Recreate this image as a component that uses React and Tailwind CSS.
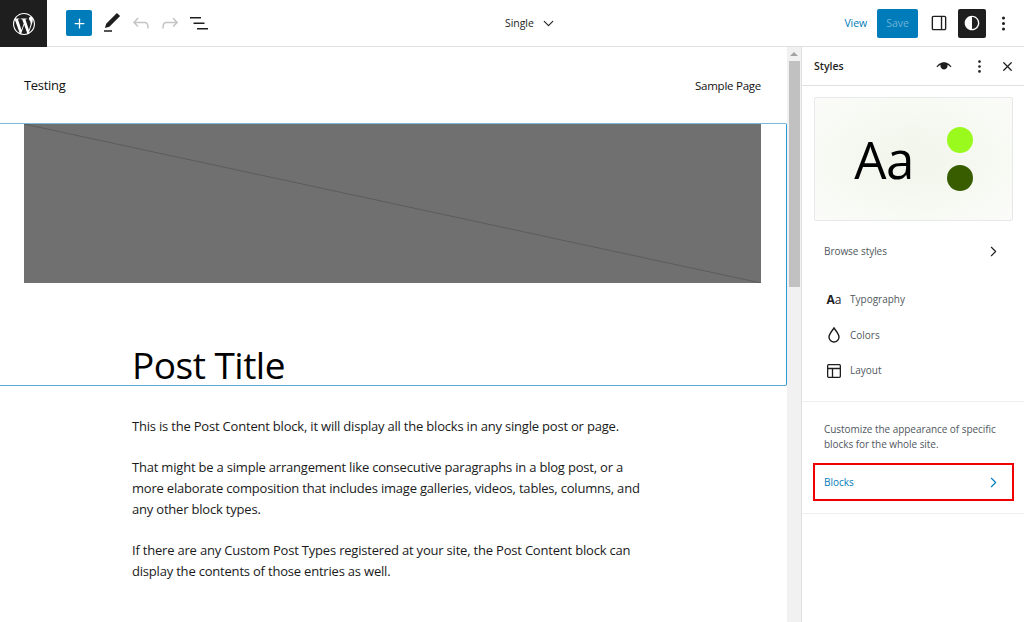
import { ChevronDown, ChevronRight, Plus, X, MoreVertical } from 'lucide-react';

const font = "font-['Open_Sans','Noto_Sans',sans-serif]";

function WpLogo() {
  return (
    <svg className="w-[22px] h-[22px] fill-white" viewBox="0 0 24 24" aria-hidden="true">
      <path d="M21.469 6.825c.84 1.537 1.318 3.3 1.318 5.175 0 3.979-2.156 7.456-5.363 9.325l3.295-9.527c.615-1.54.82-2.771.82-3.864 0-.405-.026-.78-.07-1.11m-7.981.105c.647-.03 1.232-.105 1.232-.105.582-.075.514-.93-.067-.899 0 0-1.755.135-2.88.135-1.064 0-2.85-.15-2.85-.15-.585-.03-.661.855-.075.885 0 0 .54.061 1.125.09l1.68 4.605-2.37 7.08L5.354 6.9c.649-.03 1.234-.1 1.234-.1.585-.075.516-.93-.065-.896 0 0-1.746.138-2.874.138-.2 0-.438-.008-.69-.015C4.911 3.15 8.235 1.215 12 1.215c2.809 0 5.365 1.072 7.286 2.833-.046-.003-.091-.009-.141-.009-1.06 0-1.812.923-1.812 1.914 0 .89.513 1.643 1.06 2.531.411.72.89 1.643.89 2.977 0 .915-.354 1.994-.821 3.479l-1.075 3.585-3.9-11.61.001.014zM12 22.784c-1.059 0-2.081-.153-3.048-.437l3.237-9.406 3.315 9.087c.024.053.05.101.078.149-1.12.393-2.325.609-3.582.609M1.211 12c0-1.564.336-3.05.935-4.39L7.29 21.709C3.694 19.96 1.212 16.271 1.211 12M12 0C5.385 0 0 5.385 0 12s5.385 12 12 12 12-5.385 12-12S18.615 0 12 0" />
    </svg>
  );
}

function Toolbar() {
  return (
    <header className="h-[47px] shrink-0 flex items-center border-b border-[#e0e0e0] bg-white">
      <div className="w-[47px] h-[47px] -mb-px bg-[#1e1e1e] flex items-center justify-center shrink-0">
        <WpLogo />
      </div>
      <div className="flex items-center ml-[19px]">
        <div className="w-[26px] h-[26px] rounded-[2px] bg-[#007cba] flex items-center justify-center">
          <Plus size={15} strokeWidth={2} className="text-white" />
        </div>
        <svg className="w-[24px] h-[24px] ml-[8px]" viewBox="0 0 24 24" fill="#1e1e1e" aria-hidden="true">
          <path d="M20.1 5.1 16.9 2 6.2 12.7l-1.3 4.4 4.5-1.3L20.1 5.1zM4 20.8h8v-1.5H4v1.5z" />
        </svg>
        <svg className="w-[24px] h-[24px] ml-[5px]" viewBox="0 0 24 24" fill="#c4c4c4" aria-hidden="true">
          <path d="M18.3 11.7c-.6-.6-1.4-.9-2.3-.9H6.7l2.9-3.3-1.1-1-4.5 5L8.5 16l1-1-2.7-2.7H16c.5 0 .9.2 1.3.5 1 1 1 3.4 1 4.5v.3h1.5v-.2c0-1.5 0-4.3-1.5-5.7z" />
        </svg>
        <svg className="w-[24px] h-[24px] ml-[5px]" viewBox="0 0 24 24" fill="#c4c4c4" aria-hidden="true">
          <path d="M15.6 6.5l-1.1 1 2.9 3.3H8c-.9 0-1.7.3-2.3.9-1.4 1.5-1.4 4.2-1.4 5.6v.2h1.5v-.3c0-1.1 0-3.5 1-4.5.3-.3.7-.5 1.3-.5h9.2L14.500 15l1.100 1.100 4.600-4.600-4.600-5z" />
        </svg>
        <svg className="w-[24px] h-[24px] ml-[5px]" viewBox="0 0 24 24" fill="#1e1e1e" aria-hidden="true">
          <path d="M3 6h11v1.5H3V6zm3.5 5.5h11V13h-11v-1.5zM10 17h11v1.5H10V17z" />
        </svg>
      </div>
      <div className="flex items-center gap-[6px] ml-[294px] pt-[1px]">
        <span className={`text-[10.5px] tracking-[-0.05px] text-[#1e1e1e] ${font}`}>Single</span>
        <ChevronDown size={17} strokeWidth={1.6} className="text-[#1e1e1e]" />
      </div>
      <span className={`ml-auto pt-[1px] text-[10.5px] tracking-[-0.1px] text-[#007cba] ${font}`}>View</span>
      <div className={`ml-[10px] w-[41px] h-[29px] pt-[1px] rounded-[2px] bg-[#007cba] flex items-center justify-center text-[10.5px] text-[#6fb2d6] ${font}`}>
        Save
      </div>
      <svg className="w-[22px] h-[22px] ml-[10px]" viewBox="0 0 24 24" fill="#1e1e1e" aria-hidden="true">
        <path d="M18 4H6c-1.100 0-2 .9-2 2v12c0 1.100.9 2 2 2h12c1.100 0 2-.9 2-2V6c0-1.100-.9-2-2-2zM5.500 18V6c0-.3.2-.5.5-.5h8v13H6c-.3 0-.5-.2-.5-.5zm13 0c0 .3-.2.5-.5.5h-2.500v-13H18c.3 0 .5.2.5.5v12z" />
      </svg>
      <div className="ml-[8px] w-[28px] h-[29px] rounded-[2px] bg-[#1e1e1e] flex items-center justify-center">
        <svg className="w-[22px] h-[22px]" viewBox="0 0 24 24" fill="white" aria-hidden="true">
          <path d="M12 4c-4.400 0-8 3.600-8 8s3.600 8 8 8 8-3.600 8-8-3.600-8-8-8zm0 14.500c-3.600 0-6.500-2.900-6.500-6.500S8.400 5.500 12 5.500v13z" transform="matrix(-1 0 0 1 24 0)" />
        </svg>
      </div>
      <MoreVertical size={19} strokeWidth={1.8} className="ml-[8px] mr-[11px] text-[#1e1e1e]" />
    </header>
  );
}

function Canvas() {
  return (
    <main className={`flex-1 min-w-0 bg-white overflow-hidden ${font}`}>
      <div className="h-[76px] flex items-center justify-between pl-[24px] pr-[26px] pt-[1px] text-[#111]">
        <span className="text-[13px] tracking-[-0.3px]">Testing</span>
        <span className="text-[11.5px] tracking-[-0.25px]">Sample Page</span>
      </div>
      <section className="h-[263px] border border-l-0 border-t-[#7ab8d8] border-r-[#2a9ad0] border-b-[#5aa9d2] rounded-r-[2px]">
        <div className="h-[159px] ml-[24px] mr-[25px] bg-[#707070]">
          <svg className="w-full h-full" viewBox="0 0 737 159" preserveAspectRatio="none" aria-hidden="true">
            <line x1="0" y1="0" x2="737" y2="159" stroke="#5c5c5c" strokeWidth="1" />
          </svg>
        </div>
        <h1 className="ml-[132px] mt-[60px] text-[37px] leading-[44px] text-black tracking-[-0.5px]">Post Title</h1>
      </section>
      <div className="ml-[132px] w-[510px] mt-[30px] text-[13px] leading-[21px] tracking-[-0.2px] text-[#1a1a1a] flex flex-col gap-[20px]">
        <p>This is the Post Content block, it will display all the blocks in any single post or page.</p>
        <p>That might be a simple arrangement like consecutive paragraphs in a blog post, or a more elaborate composition that includes image galleries, videos, tables, columns, and any other block types.</p>
        <p>If there are any Custom Post Types registered at your site, the Post Content block can display the contents of those entries as well.</p>
      </div>
    </main>
  );
}

function Scrollbar() {
  return (
    <div className="w-[14px] shrink-0 bg-[#f1f1f1] flex flex-col items-center">
      <div className="h-[14px] flex items-center justify-center">
        <div className="w-0 h-0 border-x-[4px] border-x-transparent border-b-[4px] border-b-[#a3a3a3]" />
      </div>
      <div className="w-[11px] h-[226px] bg-[#c1c1c1]" />
    </div>
  );
}

function NavRow({ icon, label }) {
  return (
    <div className="h-[35.5px] flex items-center pl-[24px] gap-[8px] text-[10px] text-[#50575e]">
      <span className="w-[16px] flex items-center justify-center text-[#1e1e1e]">{icon}</span>
      {label}
    </div>
  );
}

function Sidebar() {
  return (
    <aside className={`w-[223px] shrink-0 border-l border-[#e0e0e0] bg-white flex flex-col ${font}`}>
      <div className="h-[39px] shrink-0 flex items-center border-b border-[#e0e0e0] pl-[12px]">
        <span className="pt-[1px] text-[10.5px] font-semibold text-[#1e1e1e]">Styles</span>
        <svg className="w-[18px] h-[18px] ml-auto" viewBox="0 0 24 24" fill="#1e1e1e" aria-hidden="true">
          <path d="M12 7C7 7 3.500 10.500 2 13l1 .6C4 12.500 5.500 11.300 7.300 10.400a5.500 5.500 0 0 0 0 2.100C8 15 10 16.500 12 16.500s4-1.500 4.700-4a5.500 5.500 0 0 0 0-2.100c1.800.9 3.300 2.100 4.300 3.200l1-.6C20.500 10.500 17 7 12 7z" />
        </svg>
        <MoreVertical size={17} strokeWidth={1.8} className="ml-[18px] text-[#1e1e1e]" />
        <X size={15} strokeWidth={2} className="ml-[12px] mr-[9px] text-[#1e1e1e]" />
      </div>
      <div className="mt-[11px] ml-[12px] mr-[11px] h-[124px] border border-[#e8e8e8] rounded-[2px] bg-[radial-gradient(ellipse_at_center,#f1f5ea_0%,#fbfcf9_100%)] flex items-center justify-center">
        <span className="text-[51px] leading-none text-black tracking-[-0.5px]">Aa</span>
        <div className="ml-[33px] flex flex-col gap-[12px]">
          <div className="w-[26px] h-[26px] rounded-full bg-[#9afa1e]" />
          <div className="w-[26px] h-[26px] rounded-full bg-[#375d00]" />
        </div>
      </div>
      <div className="mt-[12px] h-[36px] flex items-center justify-between pl-[22px] pr-[22px] text-[10px] tracking-[-0.05px] text-[#50575e]">
        Browse styles
        <ChevronRight size={17} strokeWidth={1.6} className="text-[#1e1e1e]" />
      </div>
      <div className="mt-[13px]">
        <NavRow label="Typography" icon={
          <span className="text-[12px] leading-none text-[#1e1e1e]"><span className="font-bold">A</span><span>a</span></span>
        } />
        <NavRow label="Colors" icon={
          <svg className="w-[16px] h-[18px] -mt-[1px]" viewBox="0 0 16 18" fill="none" stroke="#1e1e1e" strokeWidth="1.4" aria-hidden="true">
            <path d="M8 2 C6 5 3 8 3 11 a5 5 0 0 0 10 0 C13 8 10 5 8 2z" />
          </svg>
        } />
        <NavRow label="Layout" icon={
          <svg className="w-[16px] h-[16px]" viewBox="0 0 16 16" fill="none" stroke="#1e1e1e" strokeWidth="1.3" aria-hidden="true">
            <rect x="1.650" y="1.650" width="12.700" height="12.700" rx="1" />
            <path d="M1.650 5.500h12.700M6.500 5.500v8.800" />
          </svg>
        } />
      </div>
      <div className="mt-[12.5px] border-t border-[#eeeeee] pt-[20px] pb-[12px] border-b">
        <p className="ml-[22px] mr-[24px] text-[10px] leading-[15px] tracking-[-0.05px] text-[#50575e]">
          Customize the appearance of specific blocks for the whole site.
        </p>
        <div className="mt-[11px] ml-[11px] mr-[10px] h-[38px] pt-[1px] border-[2px] border-[#f00000] flex items-center justify-between pl-[9px] pr-[10px] text-[10px] text-[#007cba]">
          Blocks
          <ChevronRight size={17} strokeWidth={1.6} />
        </div>
      </div>
    </aside>
  );
}

export default function App() {
  return (
    <div className="h-[622px] w-[1024px] flex flex-col overflow-hidden bg-white">
      <Toolbar />
      <div className="flex-1 flex min-h-0">
        <Canvas />
        <Scrollbar />
        <Sidebar />
      </div>
    </div>
  );
}
